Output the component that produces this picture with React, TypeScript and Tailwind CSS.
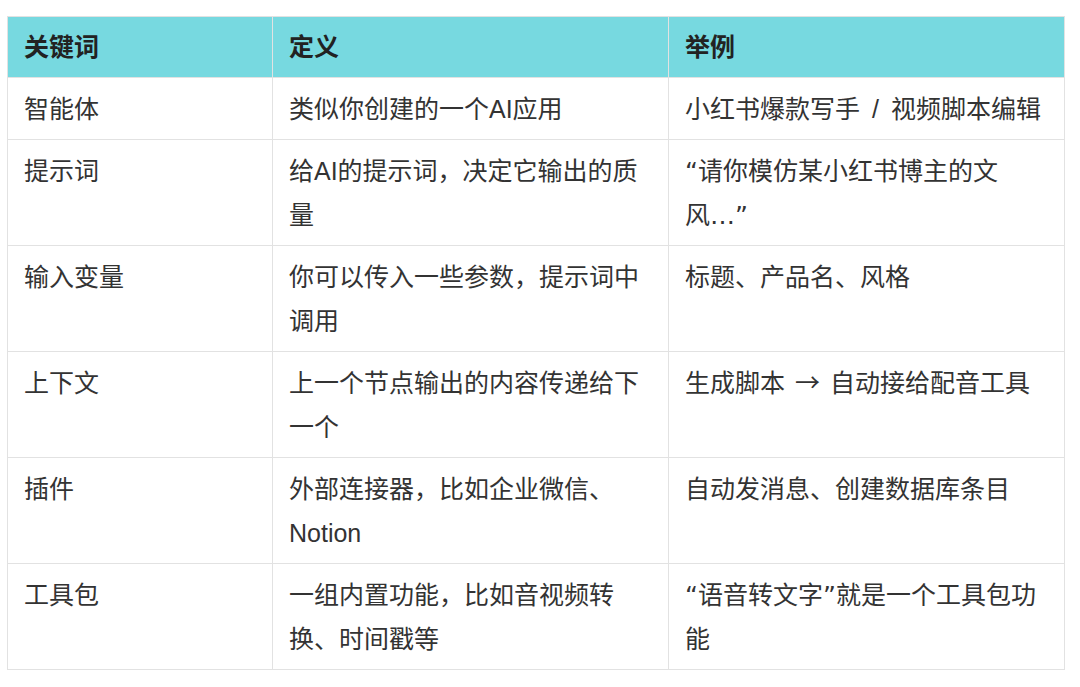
import React from "react";

const cjk = { fontFamily: '"Noto Sans CJK SC", sans-serif' };
const dv = { fontFamily: '"DejaVu Sans", sans-serif' };

const Q = ({ c }: { c: string }) => (
  <span style={dv} className="leading-none">
    {c}
  </span>
);

const rows: [React.ReactNode, React.ReactNode, React.ReactNode][] = [
  [
    "智能体",
    "类似你创建的一个AI应用",
    <>
      小红书爆款写手<span className="mx-[12px]">/</span>视频脚本编辑
    </>,
  ],
  [
    "提示词",
    "给AI的提示词，决定它输出的质量",
    <>
      <Q c="“" />请你模仿某小红书博主的文风<Q c="…”" />
    </>,
  ],
  ["输入变量", "你可以传入一些参数，提示词中调用", "标题、产品名、风格"],
  [
    "上下文",
    "上一个节点输出的内容传递给下一个",
    <>
      生成脚本 <span style={cjk} className="mx-[3px] leading-none">→</span> 自动接给配音工具
    </>,
  ],
  ["插件", "外部连接器，比如企业微信、Notion", "自动发消息、创建数据库条目"],
  [
    "工具包",
    "一组内置功能，比如音视频转换、时间戳等",
    <>
      <Q c="“" />语音转文字<Q c="”" />就是一个工具包功能
    </>,
  ],
];

export default function App() {
  return (
    <div
      className="w-[1080px] h-[687px] bg-white pt-[16px] pl-[7px]"
      style={{ fontFamily: '"Liberation Sans", "Noto Sans CJK SC", sans-serif' }}
    >
      <table className="table-fixed border-collapse w-[1057px] text-[25px] leading-[44px] text-[#333333]">
        <colgroup>
          <col className="w-[265px]" />
          <col className="w-[396px]" />
          <col className="w-[396px]" />
        </colgroup>
        <thead>
          <tr className="bg-[#77d9e0]">
            {["关键词", "定义", "举例"].map((h) => (
              <th
                key={h}
                className="border border-[#e2e2e2] text-left align-top font-bold text-[#222222] pl-[16px] pr-[16px] pt-[8px] pb-[8px]"
              >
                {h}
              </th>
            ))}
          </tr>
        </thead>
        <tbody>
          {rows.map((r, i) => (
            <tr key={i}>
              {r.map((c, j) => (
                <td
                  key={j}
                  className="border border-[#e2e2e2] align-top pl-[16px] pr-[16px] pt-[9px] pb-[8px]"
                >
                  {c}
                </td>
              ))}
            </tr>
          ))}
        </tbody>
      </table>
    </div>
  );
}
